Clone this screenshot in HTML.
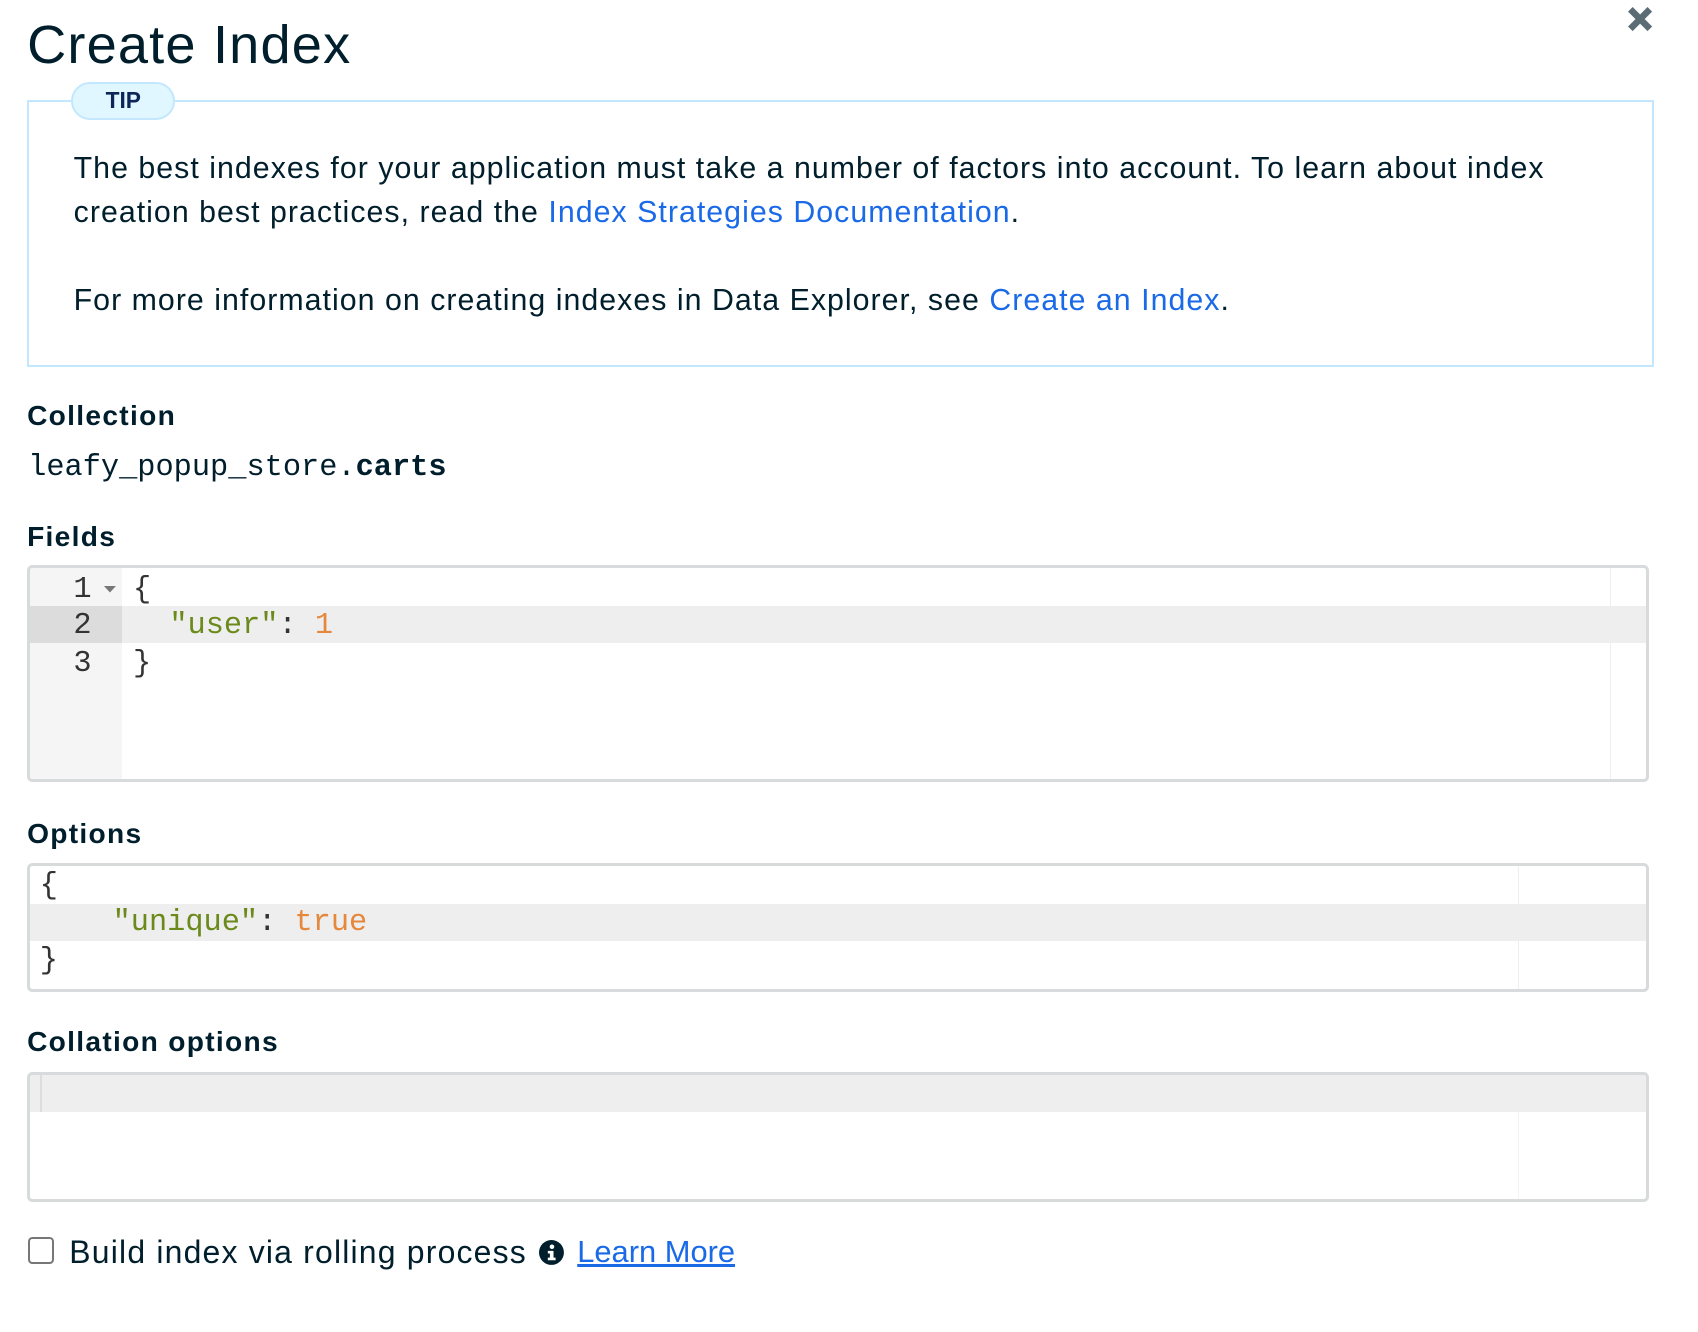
<!DOCTYPE html>
<html><head><meta charset="utf-8"><style>
html,body{margin:0;padding:0;background:#fff;overflow:hidden}
body{width:1698px;height:1332px}
#w{zoom:1.083;width:1568px;height:1230px;position:relative;font-family:"Liberation Sans",sans-serif;color:#001e2b}
.a{position:absolute;white-space:nowrap}
h1{position:absolute;left:25px;top:13px;margin:0;font-weight:normal;font-size:50px;letter-spacing:1.1px}
.x{position:absolute;left:1501px;top:5px;width:26px;height:26px}
.tip{position:absolute;left:25px;top:92px;width:1499px;height:243px;border:2px solid #c3e7fe}
.pill{position:absolute;left:66px;top:76px;width:92px;height:31px;border:2px solid #c3e7fe;background:#e1f7ff;border-radius:18px;text-align:center;font-weight:bold;color:#0c2657;font-size:21px;line-height:31px}
.t{font-size:28px;left:68px;letter-spacing:0.95px}
a{color:#1a6ae8;text-decoration:none}
.lbl{font-weight:bold;font-size:26px;left:25px;letter-spacing:1.2px}
.mono{font-family:"Liberation Mono",monospace}
.ed{position:absolute;left:25px;width:1492px;border:3px solid #d8dbdc;border-radius:5px;overflow:hidden;background:#fff}
.row{position:absolute;left:0;right:0;height:34px}
.code{font-family:"Liberation Mono",monospace;font-size:28px;color:#333;position:absolute;line-height:34px;white-space:pre}
.s{color:#6b8a1b}.n{color:#e5883c}
</style></head><body><div id="w">
<h1>Create Index</h1>
<svg class="x" viewBox="0 0 26 26"><path d="M4 4L22 22M22 4L4 22" stroke="#5c6c75" stroke-width="6"/></svg>
<div class="tip"></div>
<div class="pill">TIP</div>
<div class="a t" style="top:140px">The best indexes for your application must take a number of factors into account. To learn about index</div>
<div class="a t" style="top:181px">creation best practices, read the <a>Index Strategies Documentation</a>.</div>
<div class="a t" style="top:262px">For more information on creating indexes in Data Explorer, see <a>Create an Index</a>.</div>
<div class="a lbl" style="top:369px">Collection</div>
<div class="a mono" style="left:26px;top:416px;font-size:28px">leafy_popup_store.<b>carts</b></div>
<div class="a lbl" style="top:481px">Fields</div>
<div class="ed" style="top:522px;height:195px">
 <div style="position:absolute;left:0;top:0;bottom:0;width:85px;background:#f5f5f5"></div>
 <div style="position:absolute;left:1459px;top:0;bottom:0;width:1px;background:#eee"></div>
 <div class="row" style="top:35px;background:#eeeeee"></div>
 <div style="position:absolute;left:0;top:35px;width:85px;height:34px;background:#dcdcdc"></div>
 <div class="code" style="left:40px;top:3px;color:#333">1</div>
 <svg style="position:absolute;left:68px;top:16px" width="11" height="7"><path d="M0 0H11L5.5 6Z" fill="#777"/></svg>
 <div class="code" style="left:40px;top:37px">2</div>
 <div class="code" style="left:40px;top:72px">3</div>
 <div class="code" style="left:95px;top:3px">{</div>
 <div class="code" style="left:95px;top:37px">  <span class="s">"user"</span>: <span class="n">1</span></div>
 <div class="code" style="left:95px;top:72px">}</div>
</div>
<div class="a lbl" style="top:755px">Options</div>
<div class="ed" style="top:797px;height:113px">
 <div style="position:absolute;left:1374px;top:0;bottom:0;width:1px;background:#eee"></div>
 <div class="row" style="top:35px;background:#eeeeee"></div>
 <div class="code" style="left:9px;top:2px">{</div>
 <div class="code" style="left:9px;top:36px">    <span class="s">"unique"</span>: <span class="n">true</span></div>
 <div class="code" style="left:9px;top:71px">}</div>
</div>
<div class="a lbl" style="top:947px">Collation options</div>
<div class="ed" style="top:990px;height:114px">
 <div style="position:absolute;left:1374px;top:0;bottom:0;width:1px;background:#f2f2f2"></div>
 <div class="row" style="top:0;background:#eeeeee"></div>
 <div style="position:absolute;left:9px;top:0;width:2px;height:34px;background:#ddd"></div>
</div>
<div style="position:absolute;left:26px;top:1142px;width:20px;height:21px;border:2px solid #777;border-radius:4px"></div>
<div class="a" style="left:64px;top:1139px;font-size:29.5px;letter-spacing:1.1px">Build index via rolling process</div>
<svg style="position:absolute;left:498px;top:1145px" width="23" height="23" viewBox="0 0 24 24"><circle cx="12" cy="12" r="12" fill="#001e2b"/><circle cx="12.5" cy="6.5" r="2.2" fill="#fff"/><path d="M8.5 10.5H14V17H16V19.5H8.5V17H10.5V13H8.5Z" fill="#fff"/></svg>
<div class="a" style="left:533px;top:1139px;font-size:28.5px"><a style="text-decoration:underline">Learn More</a></div>
</div></body></html>
